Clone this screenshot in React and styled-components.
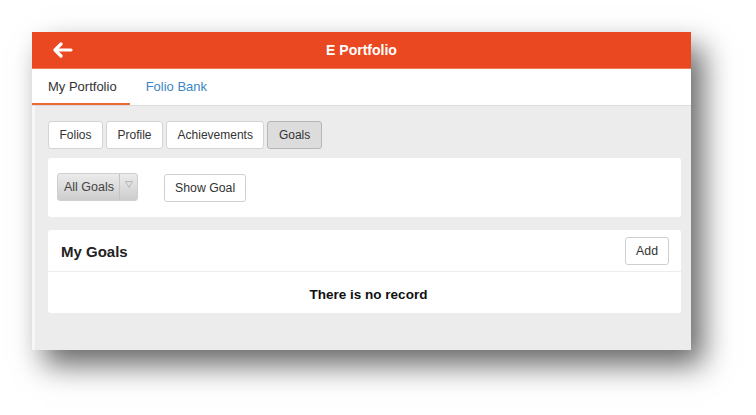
import React from "react";
import styled, { createGlobalStyle } from "styled-components";

const Global = createGlobalStyle`
  html, body { margin: 0; padding: 0; background: #ffffff; }
  body { font-family: "Liberation Sans", Arial, sans-serif; }
  * { box-sizing: border-box; }
`;

const Page = styled.div`
  width: 756px;
  height: 415px;
  padding: 32px 0 0 32px;
  overflow: hidden;
`;

const Window = styled.div`
  width: 659px;
  height: 318px;
  display: flex;
  flex-direction: column;
  background: #ececec;
  box-shadow: 12px 15px 28px rgba(0, 0, 0, 0.6);
`;

const Header = styled.header`
  height: 37px;
  background: #ea4820;
  border-bottom: 1px solid #f07a55;
  display: grid;
  grid-template-columns: 60px 1fr 60px;
  align-items: center;
  flex-shrink: 0;
`;

const BackBtn = styled.div`
  display: flex;
  align-items: center;
  padding-left: 20px;
  height: 100%;
`;

const Title = styled.div`
  text-align: center;
  color: #ffffff;
  font-weight: bold;
  font-size: 14px;
`;

const TabBar = styled.nav`
  height: 37px;
  background: #ffffff;
  border-bottom: 1px solid #dcdcdc;
  display: flex;
  flex-shrink: 0;
`;

const Tab = styled.div`
  padding: 1px 13px 0 16px;
  display: flex;
  align-items: center;
  font-size: 13px;
  color: ${(p) => (p.$active ? "#333333" : "#3d86c6")};
  border-bottom: 2px solid ${(p) => (p.$active ? "#ea6a38" : "transparent")};
`;

const Content = styled.main`
  flex: 1;
  border-left: 3px solid #f7f7f7;
  padding: 15px 10px 0 13px;
  display: flex;
  flex-direction: column;
`;

const SegRow = styled.div`
  display: flex;
  gap: 3px;
  margin-bottom: 9px;
`;

const SegBtn = styled.div`
  height: 28px;
  padding: 0 10.5px;
  display: flex;
  align-items: center;
  font-size: 12px;
  color: #333;
  background: ${(p) => (p.$active ? "#dcdcdc" : "#ffffff")};
  border: 1px solid ${(p) => (p.$active ? "#b6b6b6" : "#d4d4d4")};
  border-radius: 3px;
`;

const Card = styled.section`
  background: #ffffff;
  border-radius: 3px;
  margin-bottom: ${(p) => p.$mb || 0}px;
`;

const FilterBody = styled.div`
  height: 59px;
  display: flex;
  align-items: center;
  padding: 0 0 0 9px;
  gap: 26px;
`;

const Select = styled.div`
  height: 28px;
  width: 81px;
  display: flex;
  border: 1px solid #cfcfcf;
  border-radius: 3px;
  background: linear-gradient(#ebebeb, #cdcdcd);
  margin-top: -2px;
`;

const SelectLabel = styled.div`
  flex: 1;
  display: flex;
  align-items: center;
  padding-left: 6px;
  font-size: 12.5px;
  color: #444;
`;

const SelectArrow = styled.div`
  width: 18px;
  border-left: 1px solid #c4c4c4;
  display: flex;
  align-items: center;
  justify-content: center;
  padding-bottom: 4px;
`;

const Btn = styled.div`
  height: 28px;
  padding: 0 10px;
  display: flex;
  align-items: center;
  font-size: 12.3px;
  color: #333;
  background: #fff;
  border: 1px solid #cfcfcf;
  border-radius: 3px;
`;

const CardHead = styled.div`
  height: 42px;
  display: flex;
  align-items: center;
  justify-content: space-between;
  padding: 0 12px 0 13px;
  border-bottom: 1px solid #ececec;
`;

const CardTitle = styled.h2`
  margin: 0;
  font-size: 15px;
  font-weight: bold;
  color: #222;
  padding-top: 2px;
`;

const Empty = styled.div`
  height: 41px;
  display: flex;
  align-items: center;
  justify-content: center;
  font-size: 13.5px;
  font-weight: bold;
  color: #111;
  padding: 3px 0 0 8px;
`;

export default function App() {
  return (
    <>
      <Global />
      <Page>
        <Window>
          <Header>
            <BackBtn>
              <svg width="21" height="16" viewBox="0 0 21 16">
                <path
                  d="M9 2 L3 8 L9 14 M3.5 8 H19"
                  fill="none"
                  stroke="#ffffff"
                  strokeWidth="3.2"
                  strokeLinecap="round"
                  strokeLinejoin="round"
                />
              </svg>
            </BackBtn>
            <Title>E Portfolio</Title>
            <div />
          </Header>
          <TabBar>
            <Tab $active>My Portfolio</Tab>
            <Tab>Folio Bank</Tab>
          </TabBar>
          <Content>
            <SegRow>
              <SegBtn>Folios</SegBtn>
              <SegBtn>Profile</SegBtn>
              <SegBtn>Achievements</SegBtn>
              <SegBtn $active>Goals</SegBtn>
            </SegRow>
            <Card $mb={13}>
              <FilterBody>
                <Select>
                  <SelectLabel>All Goals</SelectLabel>
                  <SelectArrow>
                    <svg width="8" height="7" viewBox="0 0 8 7">
                      <path d="M0.5 0.5 H7.5 L4 6.5 Z" fill="none" stroke="#b8b8b8" strokeWidth="1" />
                    </svg>
                  </SelectArrow>
                </Select>
                <Btn>Show Goal</Btn>
              </FilterBody>
            </Card>
            <Card>
              <CardHead>
                <CardTitle>My Goals</CardTitle>
                <Btn>Add</Btn>
              </CardHead>
              <Empty>There is no record</Empty>
            </Card>
          </Content>
        </Window>
      </Page>
    </>
  );
}
